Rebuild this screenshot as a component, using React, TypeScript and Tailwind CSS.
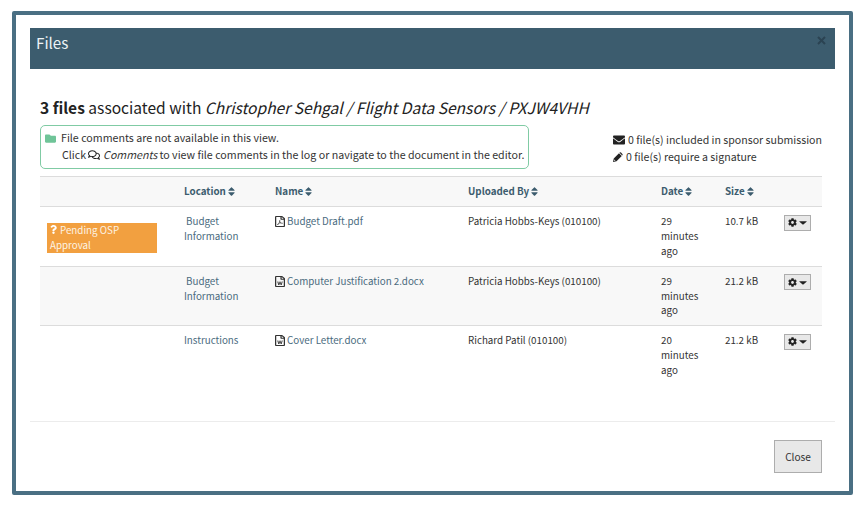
import React from "react";
import {
  FaCaretDown,
  FaCog,
  FaEnvelope,
  FaFolder,
  FaQuestion,
  FaRegComments,
  FaRegFilePdf,
  FaRegFileWord,
  FaSort,
} from "react-icons/fa";

type FileRow = {
  status?: string;
  location: string;
  name: string;
  kind: "pdf" | "word";
  uploadedBy: string;
  date: string;
  size: string;
};

const files: FileRow[] = [
  {
    status: "Pending OSP Approval",
    location: "Budget Information",
    name: "Budget Draft.pdf",
    kind: "pdf",
    uploadedBy: "Patricia Hobbs-Keys (010100)",
    date: "29 minutes ago",
    size: "10.7 kB",
  },
  {
    location: "Budget Information",
    name: "Computer Justification 2.docx",
    kind: "word",
    uploadedBy: "Patricia Hobbs-Keys (010100)",
    date: "29 minutes ago",
    size: "21.2 kB",
  },
  {
    location: "Instructions",
    name: "Cover Letter.docx",
    kind: "word",
    uploadedBy: "Richard Patil (010100)",
    date: "20 minutes ago",
    size: "21.2 kB",
  },
];

const columns = "grid grid-cols-[144px_91px_193px_193px_64px_59px_38px]";

function Heading({ children }: { children: string }) {
  return (
    <div className="flex items-center gap-[2px] whitespace-nowrap">
      <span>{children}</span>
      <FaSort className="h-[11px] w-[7px] shrink-0" preserveAspectRatio="none" />
    </div>
  );
}

function Row({ file, striped }: { file: FileRow; striped: boolean }) {
  const Icon = file.kind === "pdf" ? FaRegFilePdf : FaRegFileWord;
  return (
    <div className={`${columns} h-[59.5px] border-t border-[#dcdcdc] pt-[7.3px] ${striped ? "bg-[#f8f8f8]" : ""}`}>
      <div className="pl-[7px] pt-[9px]">
        {file.status && (
          <div className="h-[29.5px] w-[110px] bg-[#f2a040] pl-[3px] pr-[30px] text-[#fdf3e4]">
            <FaQuestion className="mr-[3px] inline h-[9px] w-[7px] align-[0px] text-white" />
            {file.status}
          </div>
        )}
      </div>
      <div className="pr-[30px] text-[#4a6b7e]">
        {file.location.startsWith("Budget") && <span className="inline-block w-[2px]" />}
        {file.location}
      </div>
      <div className="flex h-[15px] items-center gap-[2px] whitespace-nowrap text-[#4a6b7e]">
        <Icon className="h-[11px] w-[10px] shrink-0 text-[#333]" preserveAspectRatio="none" />
        <span>{file.name}</span>
      </div>
      <div className="whitespace-nowrap">{file.uploadedBy}</div>
      <div className="w-[45px]">{file.date}</div>
      <div className="whitespace-nowrap">{file.size}</div>
      <button className="mt-[0.7px] flex h-[16px] w-[27px] items-center justify-center gap-[2px] border border-[#adadad] bg-[#e8e8e8] text-[#222]">
        <FaCog className="h-[9px] w-[9px] shrink-0" />
        <FaCaretDown className="h-[11px] w-[8px] shrink-0" preserveAspectRatio="none" />
      </button>
    </div>
  );
}

export default function App() {
  return (
    <div className="h-[506px] w-[866px] bg-white pl-[12px] pt-[11px] font-['Noto_Sans_CJK_SC','Open_Sans',sans-serif] text-[#333]">
      <div className="h-[484px] w-[840.5px] rounded-[2px] border-[4px] border-[#4a6f83] pl-[14px] pr-[13.5px] pt-[13px]">
        <header className="flex h-[41px] justify-between bg-[#3c5c6e] pl-[6px] pr-[9px]">
          <h1 className="pt-[4px] text-[15.2px] leading-[20px] text-[#eef3f6]">Files</h1>
          <svg viewBox="0 0 9 9" className="mt-[8px] h-[9px] w-[9px]" stroke="#2b4352" strokeWidth="2">
            <path d="M1 1L8 8M8 1L1 8" />
          </svg>
        </header>

        <main className="h-[353px] border-b border-[#ececec] pl-[10px] pr-[13px] pt-[26px]">
          <h2 className="h-[25px] whitespace-nowrap text-[15.57px] leading-[24px] text-[#222]">
            <b>3 files</b> associated with <i>Christopher Sehgal / Flight Data Sensors / PXJW4VHH</i>
          </h2>
          <div className="mt-[5px] flex justify-between text-[10.66px] leading-[16.5px]">
            <div className="h-[44px] w-[489px] whitespace-nowrap rounded-[5px] border border-[#80cba4] pl-[4px] pt-[4px]">
              <div className="flex items-center">
                <FaFolder className="mr-[5px] h-[11px] w-[11px] shrink-0 text-[#6fc498]" />
                File comments are not available in this view.
              </div>
              <div className="flex items-center pl-[17px]">
                Click
                <FaRegComments className="ml-[2px] mr-[3px] h-[12px] w-[12px] shrink-0 text-[#222]" />
                <i className="mr-[2px]">Comments</i> to view file comments in the log or navigate to the document in the editor.
              </div>
            </div>
            <div className="w-[209px] whitespace-nowrap pt-[7px] text-[10.6px]">
              <div className="flex items-center gap-[3px]">
                <FaEnvelope className="h-[12px] w-[12px] shrink-0 text-[#222]" />
                0 file(s) included in sponsor submission
              </div>
              <div className="flex items-center gap-[3px]">
                <svg viewBox="0 0 20 20" className="h-[10px] w-[10px] shrink-0 text-[#222]" fill="currentColor">
                  <path d="M0 20L1.5 13L12 2.5L17.5 8L7 18.5ZM13.3 1.2Q14.7 0 16 1.2L18.8 4Q20 5.3 18.8 6.7L18.5 7L13 1.5ZM2.8 15L2.2 17.8L5 17.2Z" fillRule="evenodd" />
                </svg>
                0 file(s) require a signature
              </div>
            </div>
          </div>

          <div className="mt-[7px] w-[782px] text-[9.8px] leading-[14.7px]">
            <div className={`${columns} h-[30px] items-center border-t border-[#dcdcdc] bg-[#f8f8f8] font-bold text-[#3c5c6e]`}>
              <span />
              <Heading>Location</Heading>
              <Heading>Name</Heading>
              <Heading>Uploaded By</Heading>
              <Heading>Date</Heading>
              <Heading>Size</Heading>
            </div>
            {files.map((file, i) => (
              <Row key={file.name} file={file} striped={i % 2 === 1} />
            ))}
          </div>
        </main>

        <footer className="flex justify-end pr-[13px] pt-[18px]">
          <button className="h-[33px] w-[48px] border border-[#adadad] bg-[#e8e8e8] text-[10.1px]">Close</button>
        </footer>
      </div>
    </div>
  );
}
